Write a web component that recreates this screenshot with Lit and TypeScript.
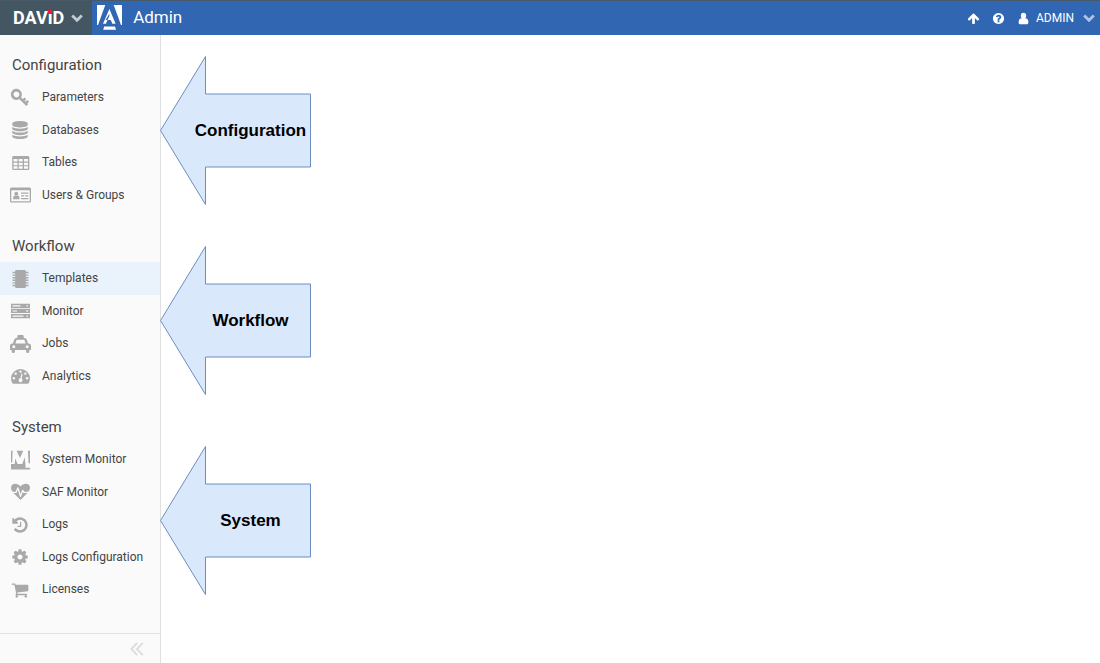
import { LitElement, html, css, svg, type SVGTemplateResult } from "lit";
import { customElement, property, state } from "lit/decorators.js";
import { classMap } from "lit/directives/class-map.js";

interface Glyph {
  box: string;
  art: SVGTemplateResult;
}

const wide = "0 0 22 20";
const square = "0 0 1792 1792";

const glyphs: Record<string, Glyph> = {
  key: {
    box: wide,
    art: svg`<g fill="none" stroke="currentColor"><ellipse cx="6.4" cy="6.4" rx="4.2" ry="4.200" stroke-width="2.700" transform="rotate(40 6.4 6.4)"/><path d="M9.300 9.300L17.200 17.200M12.600 13.200l2.800-2.800M15.200 15.800l3-3" stroke-width="2.500"/></g>`,
  },
  database: {
    box: square,
    art: svg`<path d="M896 768q237 0 443-43t325-127v170q0 69-103 128t-280 93.500-385 34.500-385-34.500-280-93.500-103-128v-170q119 84 325 127t443 43zm0 768q237 0 443-43t325-127v170q0 69-103 128t-280 93.500-385 34.500-385-34.500-280-93.500-103-128v-170q119 84 325 127t443 43zm0-384q237 0 443-43t325-127v170q0 69-103 128t-280 93.500-385 34.500-385-34.500-280-93.500-103-128v-170q119 84 325 127t443 43zm0-1152q208 0 385 34.500t280 93.500 103 128v128q0 69-103 128t-280 93.500-385 34.500-385-34.500-280-93.500-103-128v-128q0-69 103-128t280-93.500 385-34.500z"/>`,
  },
  table: {
    box: wide,
    art: svg`<path fill-rule="evenodd" d="M3.500 3h14.500a1.300 1.300 0 0 1 1.300 1.300v11.400a1.300 1.300 0 0 1-1.300 1.300h-14.500a1.300 1.300 0 0 1-1.300-1.300v-11.400a1.300 1.300 0 0 1 1.300-1.300zM3.500 6v2.500h4v-2.500zM8.700 6v2.500h4v-2.500zM14 6v2.500h4v-2.500zM3.500 9.700v2.500h4v-2.500zM8.700 9.700v2.500h4v-2.500zM14 9.700v2.500h4v-2.500zM3.500 13.300v2.500h4v-2.500zM8.700 13.300v2.500h4v-2.500zM14 13.300v2.500h4v-2.500z"/>`,
  },
  card: {
    box: wide,
    art: svg`<path fill-rule="evenodd" d="M1.500 2.500h18a1.500 1.500 0 0 1 1.500 1.500v12a1.500 1.500 0 0 1-1.500 1.500h-18a1.500 1.500 0 0 1-1.500-1.500v-12a1.500 1.500 0 0 1 1.500-1.500zM1.300 5.300v10.900h18.400v-10.900z"/><circle cx="6.300" cy="8.700" r="2"/><path d="M3 14.300q0-3.600 2-3.800 1.300 1 2.600 0 2 .2 2 3.800zM11 7.500h7.300v1.200h-7.300zM11 10.200h3.200v1.200h-3.200zM15.200 10.200h3.100v1.200h-3.100zM11 13h7.300v1.200h-7.300z"/>`,
  },
  chip: {
    box: wide,
    art: svg`<path d="M6.300 1h8.400a1.200 1.200 0 0 1 1.200 1.200v15.600a1.200 1.200 0 0 1-1.200 1.200h-8.400a1.200 1.200 0 0 1-1.200-1.200v-15.600a1.200 1.200 0 0 1 1.200-1.200z"/><path stroke="currentColor" stroke-width="1.400" d="M2.500 3.500h2.600M2.500 6.100h2.600M2.500 8.700h2.600M2.500 11.300h2.600M2.500 13.900h2.600M2.500 16.500h2.600M15.900 3.500h2.600M15.900 6.100h2.600M15.900 8.700h2.600M15.900 11.300h2.600M15.900 13.900h2.600M15.900 16.500h2.600"/>`,
  },
  server: {
    box: wide,
    art: svg`<path fill-rule="evenodd" d="M1 2.700h19v4.300h-19zM2.500 4.300v1.200h8v-1.200zM16.500 4.200v1.400h1.500v-1.400zM1 7.800h19v4.300h-19zM2.500 9.400v1.200h4.500v-1.200zM16.500 9.300v1.400h1.500v-1.400zM1 12.900h19v4.300h-19zM2.500 14.500v1.200h11v-1.200zM16.500 14.400v1.400h1.500v-1.400z"/>`,
  },
  taxi: {
    box: wide,
    art: svg`<path fill-rule="evenodd" d="M7.700 1h5.600l.6 3h.8q1.500 0 2 1.500l1.400 4h.4q2.500 0 2.500 2.500v4h-1.700v1.400q0 1.600-1.600 1.600t-1.600-1.600v-1.400h-11.200v1.400q0 1.600-1.600 1.600t-1.600-1.600v-1.400h-1.700v-4q0-2.500 2.500-2.500h.4l1.400-4q.5-1.500 2-1.500h.8zM6.600 5.800l-1.200 3.700h10.200l-1.200-3.700zM3.800 11.300a1.500 1.500 0 1 0 .01 0zM17.200 11.300a1.500 1.500 0 1 0 .01 0z"/>`,
  },
  gauge: {
    box: wide,
    art: svg`<path d="M10.500 3a9.500 9.500 0 0 1 9.500 9.300q0 2.700-1.400 5-.3.400-.8.400h-14.600q-.5 0-.8-.4-1.400-2.300-1.400-5a9.500 9.500 0 0 1 9.500-9.300z"/><g fill="#fafafa"><circle cx="10.500" cy="5.600" r="1.200"/><circle cx="5.700" cy="7.600" r="1.200"/><circle cx="15.300" cy="7.600" r="1.200"/><circle cx="3.900" cy="12.300" r="1.200"/><circle cx="17.100" cy="12.300" r="1.200"/><path d="M11.500 7.600l1.100.3-1 4.600a2 2 0 1 1-1.200-.3z"/></g>`,
  },
  letterMark: {
    box: wide,
    art: svg`<path d="M1 .8h1.600l-.4 11.700h-1.200zM6.600.8h6.600l-3.200 7.200zM17.900.8h2.100v12.400h-1.400zM5.200 8.400l3.200 7.300h-3.800zM14.800 7.200l.7 8.500h-3.900zM1 14h14.500v3.800h4.500v1.600h-19z"/>`,
  },
  heartbeat: {
    box: wide,
    art: svg`<path d="M10.500 18l-7-6.900q-2.500-2.600-2.500-5 0-4.400 4.600-4.400 2.600 0 4.900 2.500 2.300-2.500 4.900-2.500 4.600 0 4.600 4.400 0 2.400-2.500 5z"/><path fill="none" stroke="#fafafa" stroke-width="1.300" stroke-linejoin="round" d="M1.500 10.400h4.500l1.900-4.600 2.600 8.500 2.200-6 1.200 2.100h5.600"/>`,
  },
  history: {
    box: square,
    art: svg`<path d="M1664 896q0 156-61 298t-164 245-245 164-298 61q-172 0-327-72.500t-264-204.500q-7-10-6.500-22.500t8.500-20.500l137-138q10-9 25-9 16 2 23 12 73 95 179 147t225 52q104 0 198.500-40.500t163.500-109.500 109.500-163.500 40.500-198.500-40.500-198.500-109.500-163.500-163.500-109.500-198.500-40.500q-98 0-188 35.500t-160 101.500l137 138q31 30 14 69-17 40-59 40h-448q-26 0-45-19t-19-45v-448q0-42 40-59 39-17 69 14l130 129q107-101 244.500-156.500t284.500-55.500q156 0 298 61t245 164 164 245 61 298zm-640-288v448q0 14-9 23t-23 9h-320q-14 0-23-9t-9-23v-64q0-14 9-23t23-9h224v-352q0-14 9-23t23-9h64q14 0 23 9t9 23z"/>`,
  },
  cog: {
    box: square,
    art: svg`<path d="M1152 896q0-106-75-181t-181-75-181 75-75 181 75 181 181 75 181-75 75-181zm512-109v222q0 12-8 23t-20 13l-185 28q-19 54-39 91 35 50 107 138 10 12 10 25t-9 23q-27 37-99 108t-94 71q-12 0-26-9l-138-108q-44 23-91 38-16 136-29 186-7 28-36 28h-222q-14 0-24.500-8.500t-11.500-21.500l-28-184q-49-16-90-37l-141 107q-10 9-25 9-14 0-25-11-126-114-165-168-7-10-7-23 0-12 8-23 15-21 51-66.500t54-70.500q-27-50-41-99l-183-27q-13-2-21-12.500t-8-23.500v-222q0-12 8-23t19-13l186-28q14-46 39-92-40-57-107-138-10-12-10-24 0-10 9-23 26-36 98.500-107.500t94.500-71.500q13 0 26 10l138 107q44-23 91-38 16-136 29-186 7-28 36-28h222q14 0 24.500 8.500t11.500 21.500l28 184q49 16 90 37l142-107q9-9 24-9 13 0 25 10 129 119 165 170 7 8 7 22 0 12-8 23-15 21-51 66.500t-54 70.500q26 50 41 98l183 28q13 2 21 12.500t8 23.500z"/>`,
  },
  cart: {
    box: square,
    art: svg`<path d="M704 1536q0 52-38 90t-90 38-90-38-38-90 38-90 90-38 90 38 38 90zm896 0q0 52-38 90t-90 38-90-38-38-90 38-90 90-38 90 38 38 90zm128-1088v512q0 24-16.500 42.500t-40.500 21.500l-1044 122q13 60 13 70 0 16-24 64h920q26 0 45 19t19 45-19 45-45 19h-1024q-26 0-45-19t-19-45q0-11 8-31.500t16-36 21.500-40 15.500-29.500l-177-823h-204q-26 0-45-19t-19-45 19-45 45-19h256q16 0 28.500 6.500t19.500 15.500 13 24.500 8 26 5.500 29.500 4.500 26h1201q26 0 45 19t19 45z"/>`,
  },
  up: {
    box: square,
    art: svg`<path d="M1675 971q0 51-37 90l-75 75q-38 38-91 38-54 0-90-38l-294-293v704q0 52-37.500 84.500t-90.500 32.500h-128q-53 0-90.500-32.500t-37.500-84.500v-704l-294 293q-36 38-90 38t-90-38l-75-75q-38-38-38-90 0-53 38-91l651-651q35-37 90-37 54 0 91 37l651 651q37 39 37 91z"/>`,
  },
  help: {
    box: square,
    art: svg`<path d="M1024 1376v-192q0-14-9-23t-23-9h-192q-14 0-23 9t-9 23v192q0 14 9 23t23 9h192q14 0 23-9t9-23zm256-672q0-88-55.500-163t-138.500-116-170-41q-243 0-371 213-15 24 8 42l132 100q7 6 19 6 16 0 25-12 53-68 86-92 34-24 86-24 48 0 85.500 26t37.500 59q0 38-20 61t-68 45q-63 28-115.500 86.500t-52.500 125.500v36q0 14 9 23t23 9h192q14 0 23-9t9-23q0-19 21.500-49.500t54.500-49.500q32-18 49-28.500t46-35 44.500-48 28-60.500 12.500-81zm384 192q0 209-103 385.500t-279.500 279.500-385.500 103-385.500-103-279.500-279.500-103-385.500 103-385.500 279.500-279.500 385.500-103 385.500 103 279.500 279.500 103 385.500z"/>`,
  },
  user: {
    box: "0 0 12 12",
    art: svg`<path d="M6 .6q2.500 0 2.500 2.800 0 1.600-.9 2.600h.9q2 .3 2 3.600 0 1.800-1.400 1.800h-6.200q-1.400 0-1.400-1.800 0-3.300 2-3.600h.9q-.9-1-.9-2.600 0-2.800 2.500-2.800z"/>`,
  },
  chevron: {
    box: "0 0 12 12",
    art: svg`<path d="M1.200 3.500l4.800 4.800 4.800-4.800" fill="none" stroke="currentColor" stroke-width="2.800"/>`,
  },
  collapse: {
    box: "0 0 14 14",
    art: svg`<path d="M7.300.8l-6 6.200 6 6.200M12.800.8l-6 6.200 6 6.200" fill="none" stroke="currentColor" stroke-width="1.800"/>`,
  },
  adminMark: {
    box: "0 0 25 25",
    art: svg`<path d="M0 0h8.300l-7.300 20h-1zM16.700 0h8.300v20h-1zM12.400 4l6.200 14.700h-3.200l-1.700-3.700h-5.200l3.900-6.300zM12.400 4l-6.400 14.700h2.900l3.500-8zM7.200 21.500h10.800l1 3.300h-12.800z"/>`,
  },
};

@customElement("ui-icon")
export class UiIcon extends LitElement {
  @property() name = "";

  static styles = css`
    :host {
      display: inline-flex;
      width: 18px;
      height: 18px;
      flex: none;
    }
    .glyph {
      display: block;
      width: 100%;
      height: 100%;
      fill: currentColor;
    }
  `;

  render() {
    const glyph = glyphs[this.name];
    return glyph
      ? html`<svg class="glyph" viewBox=${glyph.box} aria-hidden="true">${glyph.art}</svg>`
      : null;
  }
}

@customElement("callout-arrow")
export class CalloutArrow extends LitElement {
  static styles = css`
    :host {
      display: grid;
      width: 151px;
      height: 150px;
    }
    .shape,
    .label {
      grid-area: 1 / 1;
    }
    .shape {
      width: 100%;
      height: 100%;
      fill: #dae8fc;
      stroke: #6c8ebf;
    }
    .label {
      place-self: center;
      padding-left: 30px;
      font: bold 17px/20px "Liberation Sans", Arial, sans-serif;
      color: #000;
    }
  `;

  render() {
    return html`
      <svg class="shape" viewBox="0 0 151 150" aria-hidden="true">
        <path d="M150.500 38v73h-105v37.500l-45-74 45-74v37.500z" />
      </svg>
      <span class="label"><slot></slot></span>
    `;
  }
}

const sections = [
  {
    title: "Configuration",
    items: [
      ["key", "Parameters"],
      ["database", "Databases"],
      ["table", "Tables"],
      ["card", "Users & Groups"],
    ],
  },
  {
    title: "Workflow",
    items: [
      ["chip", "Templates"],
      ["server", "Monitor"],
      ["taxi", "Jobs"],
      ["gauge", "Analytics"],
    ],
  },
  {
    title: "System",
    items: [
      ["letterMark", "System Monitor"],
      ["heartbeat", "SAF Monitor"],
      ["history", "Logs"],
      ["cog", "Logs Configuration"],
      ["cart", "Licenses"],
    ],
  },
];

@customElement("app-root")
export class AppRoot extends LitElement {
  @state() private selected = "Templates";

  static styles = css`
    :host {
      display: flex;
      flex-direction: column;
      min-height: 100vh;
      box-sizing: border-box;
      background: #fff;
      font-family: Roboto, sans-serif;
      color: #444;
    }
    button {
      display: flex;
      align-items: center;
      border: 0;
      padding: 0;
      background: none;
      font: inherit;
      color: inherit;
      cursor: pointer;
    }
    .topbar {
      display: flex;
      height: 35px;
      box-sizing: border-box;
      border-top: 1px solid #485a68;
      background: #3166b3;
      color: #fff;
    }
    .brand {
      gap: 7px;
      padding: 0 9px 0 13px;
      background: #445662;
    }
    .wordmark {
      font-size: 18px;
      font-weight: 700;
      line-height: 34px;
    }
    .dotted {
      position: relative;
    }
    .dotted::before {
      content: "";
      position: absolute;
      left: 0;
      top: 3px;
      width: 4px;
      height: 4px;
      background: #ee1c2e;
    }
    .chevron {
      width: 12px;
      height: 12px;
      color: #c3cbd2;
    }
    .app {
      display: flex;
      align-items: center;
      gap: 11px;
      margin: 0;
      padding: 0 0 2px 5px;
      font-size: 17px;
      font-weight: 400;
    }
    .mark {
      width: 25px;
      height: 25px;
    }
    .tools {
      display: flex;
      align-items: center;
      gap: 12px;
      margin-left: auto;
      padding-right: 5px;
      font-size: 12px;
    }
    .tool {
      width: 13px;
      height: 13px;
    }
    .account {
      gap: 6px;
    }
    .account .chevron {
      margin-left: 3px;
      color: #afc4e4;
    }
    .body {
      display: flex;
      flex: 1;
    }
    .sidebar {
      display: flex;
      flex-direction: column;
      width: 160px;
      border-right: 1px solid #e0e0e0;
      background: #fafafa;
    }
    .menu {
      flex: 1;
      padding-top: 14px;
    }
    .heading {
      margin: 0;
      padding-left: 12px;
      font-size: 15px;
      font-weight: 400;
      line-height: 32px;
    }
    .list {
      margin: 0 0 19px;
      padding: 0;
      list-style: none;
      font-size: 13px;
      line-height: 2.5;
    }
    .link {
      display: flex;
      align-items: center;
      height: 2.5em;
      color: inherit;
      text-decoration: none;
    }
    .link.active {
      background: #eaf3fb;
    }
    .text {
      font-size: 12px;
    }
    .item-icon {
      width: 22px;
      height: 20px;
      margin: 1px 10px 0;
      color: #a9a9a9;
    }
    .item-icon.compact {
      width: 20px;
      height: 18px;
      margin-right: 12px;
    }
    .footer {
      display: flex;
      justify-content: flex-end;
      border-top: 1px solid #e0e0e0;
      padding: 8px 16px 7px;
      color: #dcdcdc;
    }
    .collapse {
      width: 14px;
      height: 14px;
    }
    .canvas {
      flex: 1;
      display: flex;
      flex-direction: column;
      align-items: flex-start;
      margin-left: -1px;
      padding-top: 21px;
    }
    .first {
      margin-bottom: 40px;
    }
    .second {
      margin-bottom: 50px;
    }
  `;

  private pick(event: Event, label: string) {
    event.preventDefault();
    this.selected = label;
  }

  render() {
    return html`
      <header class="topbar">
        <button class="brand" type="button">
          <span class="wordmark">DAV<span class="dotted">i</span>D</span>
          <ui-icon class="chevron" name="chevron"></ui-icon>
        </button>
        <h1 class="app"><ui-icon class="mark" name="adminMark"></ui-icon>Admin</h1>
        <div class="tools">
          <button type="button" aria-label="Upload"><ui-icon class="tool" name="up"></ui-icon></button>
          <button type="button" aria-label="Help"><ui-icon class="tool" name="help"></ui-icon></button>
          <button class="account" type="button">
            <ui-icon class="tool" name="user"></ui-icon>ADMIN<ui-icon class="chevron" name="chevron"></ui-icon>
          </button>
        </div>
      </header>
      <div class="body">
        <aside class="sidebar">
          <nav class="menu">
            ${sections.map(
              (section) => html`
                <h2 class="heading">${section.title}</h2>
                <ul class="list">
                  ${section.items.map(
                    ([icon, label]) => html`
                      <li>
                        <a
                          href="#"
                          class=${classMap({ link: true, active: label === this.selected })}
                          @click=${(event: Event) => this.pick(event, label)}
                        >
                          <ui-icon
                            class=${classMap({ "item-icon": true, compact: glyphs[icon].box === square })}
                            name=${icon}
                          ></ui-icon>
                          <span class="text">${label}</span>
                        </a>
                      </li>
                    `
                  )}
                </ul>
              `
            )}
          </nav>
          <div class="footer">
            <button type="button" aria-label="Collapse menu">
              <ui-icon class="collapse" name="collapse"></ui-icon>
            </button>
          </div>
        </aside>
        <main class="canvas">
          <callout-arrow class="first">Configuration</callout-arrow>
          <callout-arrow class="second">Workflow</callout-arrow>
          <callout-arrow>System</callout-arrow>
        </main>
      </div>
    `;
  }
}
